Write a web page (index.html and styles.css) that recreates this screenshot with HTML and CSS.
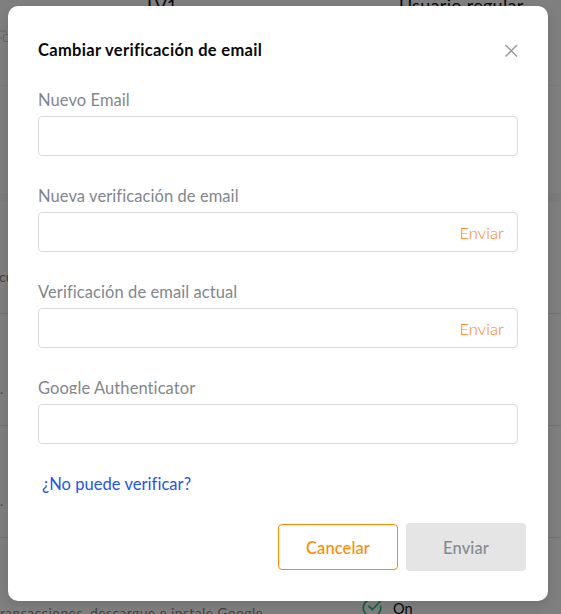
FILE: index.html
```html
<!DOCTYPE html>
<html lang="es">
<head>
<meta charset="utf-8">
<title>Cambiar verificación de email</title>
<link rel="stylesheet" href="styles.css">
</head>
<body>
<main class="account">
  <section class="profile">
    <span class="level">LV1</span>
    <span class="role">Usuario regular</span>
    <svg class="copy" width="9" height="14" viewBox="0 0 9 14" fill="none" stroke="#666"><path d="M0 1h4.500q2 0 2 2M0 8h2M9 4.500H5.500a2 2 0 0 0-2 2v3a2 2 0 0 0 2 2H9"/></svg>
  </section>
  <section class="summary"></section>
  <div class="band"></div>
  <section class="row"><span class="clip">cu</span></section>
  <section class="row"><span class="clip dot">.</span></section>
  <section class="row"><span class="clip dot">.</span></section>
  <section class="row last">
    <span class="desc">ransacciones, descargue e instale Google</span>
    <svg class="check" width="20" height="20" viewBox="0 0 20 20" fill="none" stroke="#19603c" stroke-width="1.700"><path d="M13.500 2A8.700 8.700 0 1 0 18.500 8M6.500 8l4 3.500 8-8.500"/></svg>
    <span class="state">On</span>
  </section>
</main>
<div class="dialog" role="dialog" aria-labelledby="title">
  <header class="head">
    <h1 id="title">Cambiar verificación de email</h1>
    <button class="close" aria-label="Cerrar"><svg width="14" height="14" viewBox="0 0 14 14" fill="none" stroke="#999" stroke-width="1.500"><path d="M1.500 1l11.500 11.500M13 1l-11.500 11.500"/></svg></button>
  </header>
  <form class="form">
    <div class="field"><label for="a">Nuevo Email</label><div class="box"><input id="a"></div></div>
    <div class="field"><label for="b">Nueva verificación de email</label><div class="box"><input id="b"><button type="button" class="send">Enviar</button></div></div>
    <div class="field"><label for="c">Verificación de email actual</label><div class="box"><input id="c"><button type="button" class="send">Enviar</button></div></div>
    <div class="field"><label for="d">Google Authenticator</label><div class="box"><input id="d"></div></div>
    <a class="help">¿No puede verificar?</a>
    <div class="actions">
      <button type="button" class="btn cancel">Cancelar</button>
      <button type="button" class="btn submit">Enviar</button>
    </div>
  </form>
</div>
</body>
</html>
```
FILE: styles.css
```css
* { box-sizing: border-box; }
body { margin: 0; height: 614px; overflow: hidden; position: relative; background: #7f7f7f; font-family: Lato, "Liberation Sans", sans-serif; font-size: 16.5px; }
button { font: inherit; background: none; border: 0; padding: 0; }
.account { height: 614px; overflow: hidden; color: #080808; }
.profile { height: 86px; border-bottom: 1px solid #797979; display: grid; grid-template-columns: 147px 252px 1fr; grid-template-rows: 30px 1fr; line-height: 20px; }
.level { grid-column: 2; margin-top: -5px; font-size: 18px; }
.role { grid-column: 3; margin-top: -5px; font-size: 18px; white-space: nowrap; letter-spacing: .3px; }
.copy { grid-column: 1; grid-row: 2; }
.summary { height: 107px; }
.band { height: 9px; background: #7b7b7b; }
.row { height: 112px; border-bottom: 1px solid #727272; padding-top: 66px; font-size: 14px; line-height: 20px; color: #444; }
.clip { display: block; width: 8px; margin: -1px 0 0 -1px; white-space: nowrap; }
.dot { margin-left: 0; }
.last { display: grid; grid-template-columns: 362px 31px 1fr; border: 0; }
.desc { white-space: nowrap; margin-top: -1px; letter-spacing: .34px; }
.check { margin-top: -6px; }
.state { color: #080808; margin-top: -5px; font-size: 14.5px; }
.dialog { position: absolute; left: 8px; top: 6px; width: 540px; height: 595px; background: #fff; border-radius: 10px; padding: 30px; box-shadow: 0 4px 12px rgba(0,0,0,.12); }
.head { height: 26px; display: flex; justify-content: space-between; }
h1 { margin: 0; font-size: 16.5px; line-height: 28px; font-weight: 700; letter-spacing: .32px; color: #080808; }
.close { width: 14px; height: 14px; margin-top: 8px; }
.close svg { display: block; }
.form { padding-top: 26px; }
.field { height: 96px; }
label { display: block; height: 28px; padding-top: 2px; line-height: 20px; letter-spacing: .08px; color: #82868c; white-space: nowrap; }
.field:nth-child(4) label { height: 18px; margin-bottom: 10px; overflow: clip; }
.box { width: 480px; height: 40px; border: 1px solid #d8d9dc; border-radius: 4px; display: flex; align-items: center; padding-right: 13px; }
input { flex: 1; min-width: 0; height: 36px; border: 0; background: transparent; outline: 0; }
.send { color: #ff8200; font-size: 16.5px; font-weight: 300; letter-spacing: .1px; padding-top: 2px; }
.help { display: block; padding: 1px 0 0 4px; line-height: 22px; letter-spacing: .05px; color: #2454e8; }
.actions { display: flex; justify-content: flex-end; align-items: center; gap: 8px; margin: 28px -8px 0 0; }
.btn { width: 120px; border-radius: 4px; font-weight: 500; letter-spacing: .1px; padding-top: 2px; }
.cancel { height: 46px; border: 1px solid #ff8c00; color: #ff8c00; }
.submit { height: 48px; background: #e5e5e5; color: #85898f; }
```
